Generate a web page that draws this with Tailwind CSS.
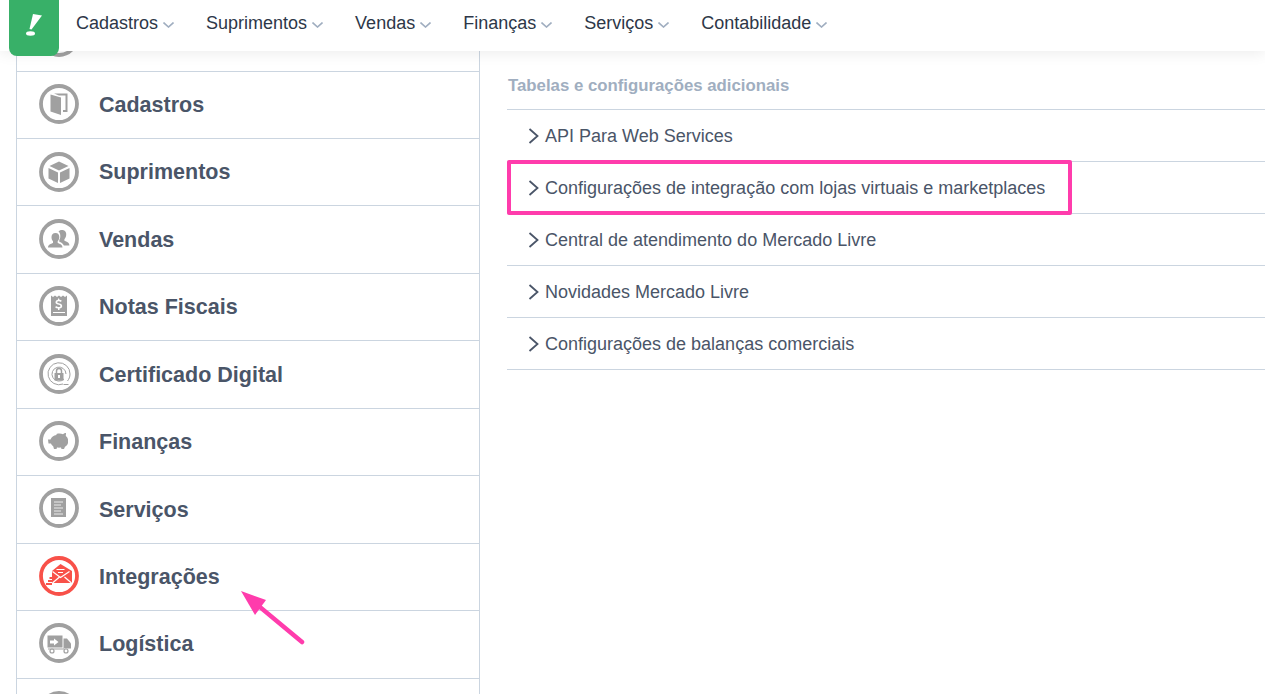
<!DOCTYPE html>
<html lang="pt-BR">
<head>
  <meta charset="UTF-8">
  <meta name="viewport" content="width=device-width, initial-scale=1.0">
  <title>Configurações</title>
  <script src="https://cdn.jsdelivr.net/npm/@tailwindcss/browser@4"></script>
</head>
<body class="relative h-screen overflow-hidden bg-white font-['Liberation_Sans',Arial,sans-serif]">

  <!-- Top bar -->
  <header class="relative z-10 flex h-[51px] items-center bg-white pl-[76px] text-[18px] text-[#2d3748] shadow-[0_2px_14px_rgba(0,0,0,0.08)]">
    <nav class="flex gap-[32px] pb-[5px]">
      <a class="flex items-center gap-[5px]">Cadastros <svg class="mt-[3px] h-[6px] w-[11px] text-[#a0aec0]" viewBox="0 0 11 6" fill="none" stroke="currentColor" stroke-width="1.6"><path d="M.5.5 5.500 5l5-4.500"/></svg></a>
      <a class="flex items-center gap-[5px]">Suprimentos <svg class="mt-[3px] h-[6px] w-[11px] text-[#a0aec0]" viewBox="0 0 11 6" fill="none" stroke="currentColor" stroke-width="1.6"><path d="M.5.5 5.500 5l5-4.500"/></svg></a>
      <a class="flex items-center gap-[5px]">Vendas <svg class="mt-[3px] h-[6px] w-[11px] text-[#a0aec0]" viewBox="0 0 11 6" fill="none" stroke="currentColor" stroke-width="1.6"><path d="M.5.5 5.500 5l5-4.500"/></svg></a>
      <a class="flex items-center gap-[5px]">Finanças <svg class="mt-[3px] h-[6px] w-[11px] text-[#a0aec0]" viewBox="0 0 11 6" fill="none" stroke="currentColor" stroke-width="1.6"><path d="M.5.5 5.500 5l5-4.500"/></svg></a>
      <a class="flex items-center gap-[5px]">Serviços <svg class="mt-[3px] h-[6px] w-[11px] text-[#a0aec0]" viewBox="0 0 11 6" fill="none" stroke="currentColor" stroke-width="1.6"><path d="M.5.5 5.500 5l5-4.500"/></svg></a>
      <a class="flex items-center gap-[5px]">Contabilidade <svg class="mt-[3px] h-[6px] w-[11px] text-[#a0aec0]" viewBox="0 0 11 6" fill="none" stroke="currentColor" stroke-width="1.6"><path d="M.5.5 5.500 5l5-4.500"/></svg></a>
    </nav>
  </header>

  <!-- Logo -->
  <div class="absolute left-[9px] top-0 z-20 flex h-[56px] w-[50px] items-center justify-center rounded-b-[8px] bg-[#38b068] pb-[6px]">
    <svg class="h-[24px] w-[16px]" viewBox="0 0 16 24" fill="white"><path d="M7 1 16 2.500 5.500 16.500 3.500 16z"/><ellipse cx="4.500" cy="20.500" rx="4.500" ry="2.200"/></svg>
  </div>

  <main class="flex h-[643px] overflow-hidden">
    <!-- Sidebar -->
    <aside class="ml-[16px] w-[464px] shrink-0 border-x border-[#cbd5e0] text-[21.5px] font-bold text-[#4a5568]">
      <div class="flex h-[21px] items-end overflow-hidden border-b border-[#cbd5e0] pl-[22px]">
        <svg class="mb-[14px] h-[40px] w-[40px] shrink-0 text-[#a0a0a0]" viewBox="0 0 40 40" fill="none"><circle cx="20" cy="20" r="18" stroke="currentColor" stroke-width="3.800"/></svg>
      </div>

      <div class="flex h-[67px] items-center gap-[20px] border-b border-[#cbd5e0] pl-[22px]">
        <svg class="mt-[12px] h-[40px] w-[40px] shrink-0 self-start text-[#a0a0a0]" viewBox="0 0 40 40" fill="none"><circle cx="20" cy="20" r="18" stroke="currentColor" stroke-width="3.800"/><path fill="currentColor" d="M11.500 10.500 22 13.500V31l-10.500-3.500z"/><path fill="currentColor" d="M15 9.500h13.500V28H24v-2h2.500V11.500H20z"/></svg>
        <span>Cadastros</span>
      </div>
      <div class="flex h-[67px] items-center gap-[20px] border-b border-[#cbd5e0] pl-[22px]">
        <svg class="mt-[13px] h-[40px] w-[40px] shrink-0 self-start text-[#a0a0a0]" viewBox="0 0 40 40" fill="none"><circle cx="20" cy="20" r="18" stroke="currentColor" stroke-width="3.800"/><path fill="currentColor" d="m20 9.500 9.500 4.500-9.500 4.500-9.500-4.500zM9.500 16l9.500 4.500V31l-9.500-4.500zM30.500 16 21 20.500V31l9.500-4.500z"/></svg>
        <span>Suprimentos</span>
      </div>
      <div class="flex h-[68px] items-center gap-[20px] border-b border-[#cbd5e0] pl-[22px]">
        <svg class="mt-[13px] h-[40px] w-[40px] shrink-0 self-start text-[#a0a0a0]" viewBox="0 0 40 40" fill="none"><circle cx="20" cy="20" r="18" stroke="currentColor" stroke-width="3.800"/><path fill="currentColor" d="M23 11c3 0 4.500 2.300 4.200 5-.2 2-1 3.500-1.800 4.300v1.500c2 .9 5 1.500 5 4.700h-5.500c-.8-2-3-3-4.600-3.700v-2c.8-1 1-2.200 1-3.800 0-2-.7-3.600-1.800-4.500.7-.9 1.700-1.500 3.500-1.500z"/><path fill="currentColor" d="M16.500 14c2.700 0 4 2 3.800 4.500-.2 1.800-.8 3-1.600 3.800v1.600c2.200.9 4.800 1.500 4.800 4.600H9c0-3.100 2.900-3.700 5-4.600v-1.600c-.8-.8-1.400-2-1.500-3.800-.2-2.500 1.300-4.500 4-4.500z"/></svg>
        <span class="mt-[2px]">Vendas</span>
      </div>
      <div class="flex h-[67px] items-center gap-[20px] border-b border-[#cbd5e0] pl-[22px]">
        <svg class="mt-[12px] h-[40px] w-[40px] shrink-0 self-start text-[#a0a0a0]" viewBox="0 0 40 40" fill="none"><circle cx="20" cy="20" r="18" stroke="currentColor" stroke-width="3.800"/><path fill="currentColor" fill-rule="evenodd" d="M12 9.500l2 1.500 2-1.500 2 1.500 2-1.500 2 1.500 2-1.500 2 1.500 2-1.500V30H12zM14 26v1h12v-1zM20 12.500h-1v1.300c-1.700.3-2.500 1.300-2.500 2.500 0 3 5 2 5 3.700 0 .7-.8 1-1.800 1s-2-.4-2.700-1l-.8 1.500c.7.600 1.700 1 2.800 1.100V24h1.500v-1.400c1.700-.3 2.700-1.300 2.700-2.700 0-3.200-5-2.200-5-3.700 0-.6.600-.9 1.500-.9s1.700.3 2.300.7l.7-1.500c-.7-.4-1.400-.7-2.200-.8z"/></svg>
        <span>Notas Fiscais</span>
      </div>
      <div class="flex h-[68px] items-center gap-[20px] border-b border-[#cbd5e0] pl-[22px]">
        <svg class="mt-[13px] h-[40px] w-[40px] shrink-0 self-start text-[#a0a0a0]" viewBox="0 0 40 40" fill="none"><circle cx="20" cy="20" r="18" stroke="currentColor" stroke-width="3.800"/><path stroke="currentColor" stroke-width="1" d="M24 30A11 11 0 1 1 31 20c0 3-1 5-2.500 7M24.500 30.500h5"/><path stroke="currentColor" stroke-width="1" d="M27 20a7 7 0 1 0-2 5"/><path fill="currentColor" d="M15.500 19h9v7.500h-9z"/><path stroke="currentColor" stroke-width="1.500" d="M17.500 19v-2a2.500 2.500 0 0 1 5 0v2"/><path fill="white" d="M19 21h2v3h-2z"/></svg>
        <span class="mt-[2px]">Certificado Digital</span>
      </div>
      <div class="flex h-[67px] items-center gap-[20px] border-b border-[#cbd5e0] pl-[22px]">
        <svg class="mt-[12px] h-[40px] w-[40px] shrink-0 self-start text-[#a0a0a0]" viewBox="0 0 40 40" fill="none"><circle cx="20" cy="20" r="18" stroke="currentColor" stroke-width="3.800"/><path fill="currentColor" d="M17.500 13c2-.6 4.500-.6 6.500.200.800-.8 2-1.200 3-1.200l-.2 3c1.200.9 2 2 2.200 3.500v3.500c-.5 1.700-1.500 3-3 3.800L25 28h-2.500l-.5-1.500c-1.300.2-2.700.2-4 0l-.5 1.500H15l-.8-2.700c-.9-.7-1.700-1.500-2.200-2.800H9.500l-.5-4h2.500c1-2.500 3-4 6-4.500z"/></svg>
        <span>Finanças</span>
      </div>
      <div class="flex h-[68px] items-center gap-[20px] border-b border-[#cbd5e0] pl-[22px]">
        <svg class="mt-[12px] h-[40px] w-[40px] shrink-0 self-start text-[#a0a0a0]" viewBox="0 0 40 40" fill="none"><circle cx="20" cy="20" r="18" stroke="currentColor" stroke-width="3.800"/><path fill="currentColor" d="M12 10h15v19H12z"/><path stroke="white" stroke-width=".8" d="M15 14h9M15 17h7M15 20h9M15 23h7M15 26h9"/></svg>
        <span class="mt-[2px]">Serviços</span>
      </div>
      <div class="flex h-[67px] items-center gap-[20px] border-b border-[#cbd5e0] pl-[22px]">
        <svg class="mt-[12px] h-[40px] w-[40px] shrink-0 self-start text-[#f85149]" viewBox="0 0 40 40" fill="none"><circle cx="20" cy="20" r="18" stroke="currentColor" stroke-width="3.800"/><path fill="currentColor" d="M21.500 8 33 15v12H13v-12z"/><path stroke="white" stroke-width="1.200" d="m13.500 15.500 8 6 9-6M17.500 13.500h8M19 16.500h5M13.500 27l7-6M32.500 27l-7-6"/><path fill="currentColor" d="M7 27h6v2H7zM9 24h4v2H9zM10.500 21h3v2h-3z"/></svg>
        <span>Integrações</span>
      </div>
      <div class="flex h-[68px] items-center gap-[20px] border-b border-[#cbd5e0] pl-[22px]">
        <svg class="mt-[12px] h-[40px] w-[40px] shrink-0 self-start text-[#a0a0a0]" viewBox="0 0 40 40" fill="none"><circle cx="20" cy="20" r="18" stroke="currentColor" stroke-width="3.800"/><path fill="currentColor" fill-rule="evenodd" d="M8.500 12.500h15v12h-15zM15 15.500v2h-4v3h4v2l4.500-3.500z"/><path fill="currentColor" d="M24.500 15.500h3.500l4 5v5h-7.500z"/><path fill="currentColor" d="M9 25.500h16v1H9z"/><circle cx="13" cy="28" r="2" stroke="currentColor" stroke-width="1.200"/><circle cx="27" cy="28" r="2" stroke="currentColor" stroke-width="1.200"/></svg>
        <span>Logística</span>
      </div>
      <div class="flex h-[67px] items-center gap-[20px] pl-[22px]">
        <svg class="mt-[12px] h-[40px] w-[40px] shrink-0 self-start text-[#a0a0a0]" viewBox="0 0 40 40" fill="none"><circle cx="20" cy="20" r="18" stroke="currentColor" stroke-width="3.800"/></svg>
      </div>
    </aside>

    <!-- Settings list -->
    <section class="ml-[27px] flex-1 pt-[22px]">
      <h2 class="flex h-[36px] items-start pl-[1px] text-[16.8px] font-bold text-[#a0aec0]">Tabelas e configurações adicionais</h2>
      <ul class="border-t border-[#cbd5e0] text-[18px] text-[#4a5568]">
        <li class="flex h-[52px] items-center gap-[6px] border-b border-[#cbd5e0] pl-[21px]"><svg class="h-[16px] w-[11px] text-[#4a5568]" viewBox="0 0 11 16" fill="none" stroke="currentColor" stroke-width="1.800"><path d="m1.500 1 8 7-8 7"/></svg><span class="mt-[2px]">API Para Web Services</span></li>
        <li class="flex h-[52px] items-center gap-[6px] border-b border-[#cbd5e0] pl-[21px]"><svg class="h-[16px] w-[11px] text-[#4a5568]" viewBox="0 0 11 16" fill="none" stroke="currentColor" stroke-width="1.800"><path d="m1.500 1 8 7-8 7"/></svg><span class="mt-[2px]">Configurações de integração com lojas virtuais e marketplaces</span></li>
        <li class="flex h-[52px] items-center gap-[6px] border-b border-[#cbd5e0] pl-[21px]"><svg class="h-[16px] w-[11px] text-[#4a5568]" viewBox="0 0 11 16" fill="none" stroke="currentColor" stroke-width="1.800"><path d="m1.500 1 8 7-8 7"/></svg><span class="mt-[2px]">Central de atendimento do Mercado Livre</span></li>
        <li class="flex h-[52px] items-center gap-[6px] border-b border-[#cbd5e0] pl-[21px]"><svg class="h-[16px] w-[11px] text-[#4a5568]" viewBox="0 0 11 16" fill="none" stroke="currentColor" stroke-width="1.800"><path d="m1.500 1 8 7-8 7"/></svg><span class="mt-[2px]">Novidades Mercado Livre</span></li>
        <li class="flex h-[52px] items-center gap-[6px] border-b border-[#cbd5e0] pl-[21px]"><svg class="h-[16px] w-[11px] text-[#4a5568]" viewBox="0 0 11 16" fill="none" stroke="currentColor" stroke-width="1.800"><path d="m1.500 1 8 7-8 7"/></svg><span class="mt-[2px]">Configurações de balanças comerciais</span></li>
      </ul>
    </section>
  </main>

  <!-- Annotations drawn over the screenshot -->
  <div class="absolute left-[507px] top-[160px] z-20 h-[55px] w-[565px] rounded-[2px] border-[4px] border-[#ff3cac]"></div>
  <svg class="absolute left-[235px] top-[585px] z-20 h-[65px] w-[75px]" viewBox="0 0 75 65" fill="none"><path stroke="#ff3cac" stroke-width="4.500" stroke-linecap="round" d="M67 57 20 18"/><path fill="#ff3cac" d="M6 6 31 15 20 30z"/></svg>
</body>
</html>
